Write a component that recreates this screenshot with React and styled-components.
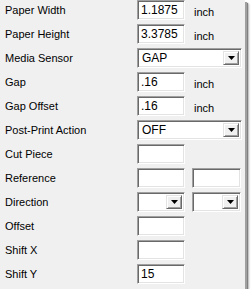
import React from "react";
import styled, { createGlobalStyle } from "styled-components";

const GlobalStyle = createGlobalStyle`
  html, body {
    margin: 0;
    padding: 0;
    background: #ffffff;
  }
  body {
    font-family: "Liberation Sans", Arial, sans-serif;
    font-size: 11px;
    color: #000;
  }
`;

const Panel = styled.div`
  width: 245px;
  height: 289px;
  box-sizing: border-box;
  background: #f0f0f0;
  box-shadow: 2px 2px 0 #a0a0a0, 3px 3px 1px #808080, 4px 4px 2px rgba(0, 0, 0, 0.25);
  display: grid;
  grid-template-columns: 137px 1fr;
  grid-auto-rows: 20px;
  row-gap: 4px;
  padding: 0 0 5px 0;
`;

const Label = styled.div`
  padding-left: 5px;
  display: flex;
  align-items: center;
  white-space: nowrap;
`;

const Controls = styled.div`
  display: flex;
  align-items: center;
  gap: ${(p) => p.$gap || 7}px;
`;

const sunken = `
  box-sizing: border-box;
  height: 20px;
  background: #ffffff;
  border-top: 1px solid #a0a0a0;
  border-left: 1px solid #a0a0a0;
  border-bottom: 1px solid #ffffff;
  border-right: 1px solid #ffffff;
  box-shadow: inset 1px 1px 0 #696969, inset -1px -1px 0 #e3e3e3;
`;

const Field = styled.div`
  ${sunken}
  width: ${(p) => p.$w || 48}px;
  padding: 0 3px;
  display: flex;
  align-items: center;
  font-size: 12px;
`;

const Unit = styled.span`
  font-size: 11px;
  padding-top: 3px;
`;

const Select = styled.div`
  ${sunken}
  width: ${(p) => p.$w || 49}px;
  display: flex;
  align-items: stretch;
  padding: 2px;
`;

const SelectText = styled.div`
  flex: 1;
  display: flex;
  align-items: center;
  padding-left: 2px;
  font-size: 12px;
`;

const DropButton = styled.div`
  width: 16px;
  box-sizing: border-box;
  background: #f0f0f0;
  border-top: 1px solid #e3e3e3;
  border-left: 1px solid #e3e3e3;
  border-bottom: 1px solid #696969;
  border-right: 1px solid #696969;
  box-shadow: inset 1px 1px 0 #ffffff, inset -1px -1px 0 #a0a0a0;
  display: flex;
  align-items: center;
  justify-content: center;
`;

const Arrow = () => (
  <svg width="7" height="4" viewBox="0 0 7 4">
    <polygon points="0,0 7,0 3.5,4" fill="#000" />
  </svg>
);

const Dropdown = ({ value, w }) => (
  <Select $w={w}>
    <SelectText>{value}</SelectText>
    <DropButton>
      <Arrow />
    </DropButton>
  </Select>
);

const App = () => {
  return (
    <>
      <GlobalStyle />
      <Panel>
        <Label>Paper Width</Label>
        <Controls $gap={9}>
          <Field>1.1875</Field>
          <Unit>inch</Unit>
        </Controls>

        <Label>Paper Height</Label>
        <Controls $gap={9}>
          <Field>3.3785</Field>
          <Unit>inch</Unit>
        </Controls>

        <Label>Media Sensor</Label>
        <Controls>
          <Dropdown value="GAP" w={105} />
        </Controls>

        <Label>Gap</Label>
        <Controls $gap={9}>
          <Field>.16</Field>
          <Unit>inch</Unit>
        </Controls>

        <Label>Gap Offset</Label>
        <Controls $gap={9}>
          <Field>.16</Field>
          <Unit>inch</Unit>
        </Controls>

        <Label>Post-Print Action</Label>
        <Controls>
          <Dropdown value="OFF" w={105} />
        </Controls>

        <Label>Cut Piece</Label>
        <Controls>
          <Field />
        </Controls>

        <Label>Reference</Label>
        <Controls>
          <Field />
          <Field $w={49} />
        </Controls>

        <Label>Direction</Label>
        <Controls>
          <Dropdown value="" w={48} />
          <Dropdown value="" w={49} />
        </Controls>

        <Label>Offset</Label>
        <Controls>
          <Field />
        </Controls>

        <Label>Shift X</Label>
        <Controls>
          <Field />
        </Controls>

        <Label>Shift Y</Label>
        <Controls>
          <Field>15</Field>
        </Controls>
      </Panel>
    </>
  );
};

export default App;
